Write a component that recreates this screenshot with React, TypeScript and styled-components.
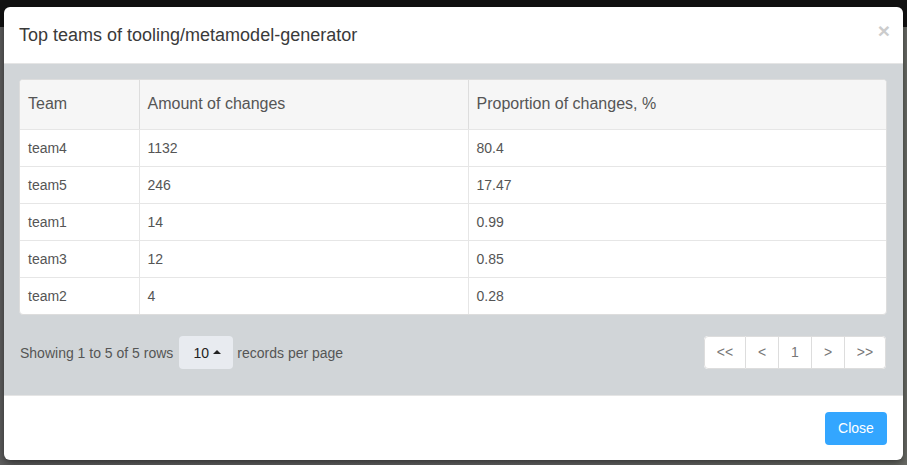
import React from "react";
import styled, { createGlobalStyle } from "styled-components";

const Global = createGlobalStyle`
  html, body { margin: 0; padding: 0; }
  body {
    font-family: "Liberation Sans", Arial, sans-serif;
    font-size: 14px;
    color: #555;
    overflow: hidden;
  }
`;

const Page = styled.div`
  position: relative;
  width: 907px;
  height: 465px;
  background: #5e5e5e;
  display: flex;
  flex-direction: column;
`;

const NavBar = styled.div`
  height: 27px;
  background: #121212;
`;

const Backdrop = styled.div`
  flex: 1;
  background: linear-gradient(90deg, #5f5f5f 0%, #666 60%, #6a6c66 100%);
`;

const Modal = styled.div`
  position: absolute;
  left: 4px;
  top: 7px;
  width: 899px;
  height: 453px;
  background: #fff;
  border-radius: 6px;
  display: flex;
  flex-direction: column;
  overflow: hidden;
  box-shadow: 0 3px 9px rgba(0, 0, 0, 0.5);
`;

const Header = styled.div`
  height: 57px;
  flex-shrink: 0;
  box-sizing: border-box;
  padding: 0 15px;
  display: flex;
  align-items: center;
  justify-content: space-between;
  border-bottom: 1px solid #e5e5e5;
`;

const Title = styled.h4`
  margin: 0;
  font-size: 18px;
  font-weight: 400;
  color: #3a3a3a;
`;

const CloseX = styled.span`
  font-size: 21px;
  font-weight: 700;
  color: #ccc;
  line-height: 1;
  margin-top: -10px;
  margin-right: -2px;
`;

const Body = styled.div`
  flex: 1;
  background: #d1d5d8;
  padding: 15px 16px 15px 15px;
  display: flex;
  flex-direction: column;
`;

const TableWrap = styled.div`
  background: #fff;
  border: 1px solid #dddddd;
  border-radius: 4px;
  overflow: hidden;
`;

const Table = styled.table`
  width: 100%;
  border-collapse: collapse;
  table-layout: fixed;
`;

const Th = styled.th<{ $w?: number }>`
  ${(p) => (p.$w ? `width: ${p.$w}px;` : "")}
  background: #f6f6f6;
  height: 49px;
  padding: 0 8px;
  text-align: left;
  font-weight: 400;
  font-size: 16px;
  color: #555;
  border-left: 1px solid #dddddd;
  border-bottom: 1px solid #e6e6e6;
  box-sizing: border-box;
  &:first-child { border-left: none; }
`;

const Td = styled.td`
  height: 37px;
  padding: 0 8px;
  font-size: 14px;
  color: #555;
  border-left: 1px solid #e6e6e6;
  border-top: 1px solid #e6e6e6;
  box-sizing: border-box;
  &:first-child { border-left: none; }
`;

const Footer = styled.div`
  height: 65px;
  flex-shrink: 0;
  box-sizing: border-box;
  border-top: 1px solid #e5e5e5;
  display: flex;
  align-items: center;
  justify-content: flex-end;
  padding: 0 16px 0 15px;
`;

const PagerRow = styled.div`
  display: flex;
  align-items: center;
  justify-content: space-between;
  margin-top: 20px;
  padding-left: 1px;
`;

const Info = styled.div`
  display: flex;
  align-items: center;
  gap: 5px;
  font-size: 14px;
  color: #555;
  margin-top: 1px;
`;

const SizeBtn = styled.div`
  width: 54px;
  height: 33px;
  box-sizing: border-box;
  background: #e8ebf0;
  border-radius: 4px;
  display: flex;
  align-items: center;
  justify-content: center;
  gap: 4px;
  color: #222;
  font-size: 14px;
  padding-left: 2px;
  margin: 0 -1px 0 1px;
`;

const Caret = styled.span`
  width: 0;
  height: 0;
  border-left: 4px solid transparent;
  border-right: 4px solid transparent;
  border-bottom: 4px solid #222;
  margin-bottom: 2px;
`;

const Pagination = styled.div`
  display: flex;
  border-radius: 4px;
  overflow: hidden;
  background: #fff;
  margin-right: 1px;
`;

const PageBtn = styled.div<{ $w: number }>`
  width: ${(p) => p.$w}px;
  height: 33px;
  box-sizing: border-box;
  display: flex;
  align-items: center;
  justify-content: center;
  font-size: 14px;
  color: #777;
  border: 1px solid #dddddd;
  border-left-width: 0;
  &:first-child { border-left-width: 1px; border-radius: 4px 0 0 4px; }
  &:last-child { border-radius: 0 4px 4px 0; }
`;

const CloseButton = styled.button`
  width: 62px;
  height: 33px;
  background: #33a6ff;
  border: none;
  border-radius: 4px;
  color: #fff;
  font-family: "Liberation Sans", Arial, sans-serif;
  font-size: 14px;
  padding: 0;
`;

const rows = [
  ["team4", "1132", "80.4"],
  ["team5", "246", "17.47"],
  ["team1", "14", "0.99"],
  ["team3", "12", "0.85"],
  ["team2", "4", "0.28"],
];

export default function App() {
  return (
    <>
      <Global />
      <Page>
        <NavBar />
        <Backdrop />
        <Modal>
          <Header>
            <Title>Top teams of tooling/metamodel-generator</Title>
            <CloseX>×</CloseX>
          </Header>
          <Body>
            <TableWrap>
              <Table>
                <thead>
                  <tr>
                    <Th $w={119}>Team</Th>
                    <Th $w={329}>Amount of changes</Th>
                    <Th>Proportion of changes, %</Th>
                  </tr>
                </thead>
                <tbody>
                  {rows.map((r) => (
                    <tr key={r[0]}>
                      <Td>{r[0]}</Td>
                      <Td>{r[1]}</Td>
                      <Td>{r[2]}</Td>
                    </tr>
                  ))}
                </tbody>
              </Table>
            </TableWrap>
            <PagerRow>
              <Info>
                <span>Showing 1 to 5 of 5 rows</span>
                <SizeBtn>
                  10 <Caret />
                </SizeBtn>
                <span>records per page</span>
              </Info>
              <Pagination>
                <PageBtn $w={42}>&lt;&lt;</PageBtn>
                <PageBtn $w={33}>&lt;</PageBtn>
                <PageBtn $w={33}>1</PageBtn>
                <PageBtn $w={33}>&gt;</PageBtn>
                <PageBtn $w={41}>&gt;&gt;</PageBtn>
              </Pagination>
            </PagerRow>
          </Body>
          <Footer>
            <CloseButton>Close</CloseButton>
          </Footer>
        </Modal>
      </Page>
    </>
  );
}
